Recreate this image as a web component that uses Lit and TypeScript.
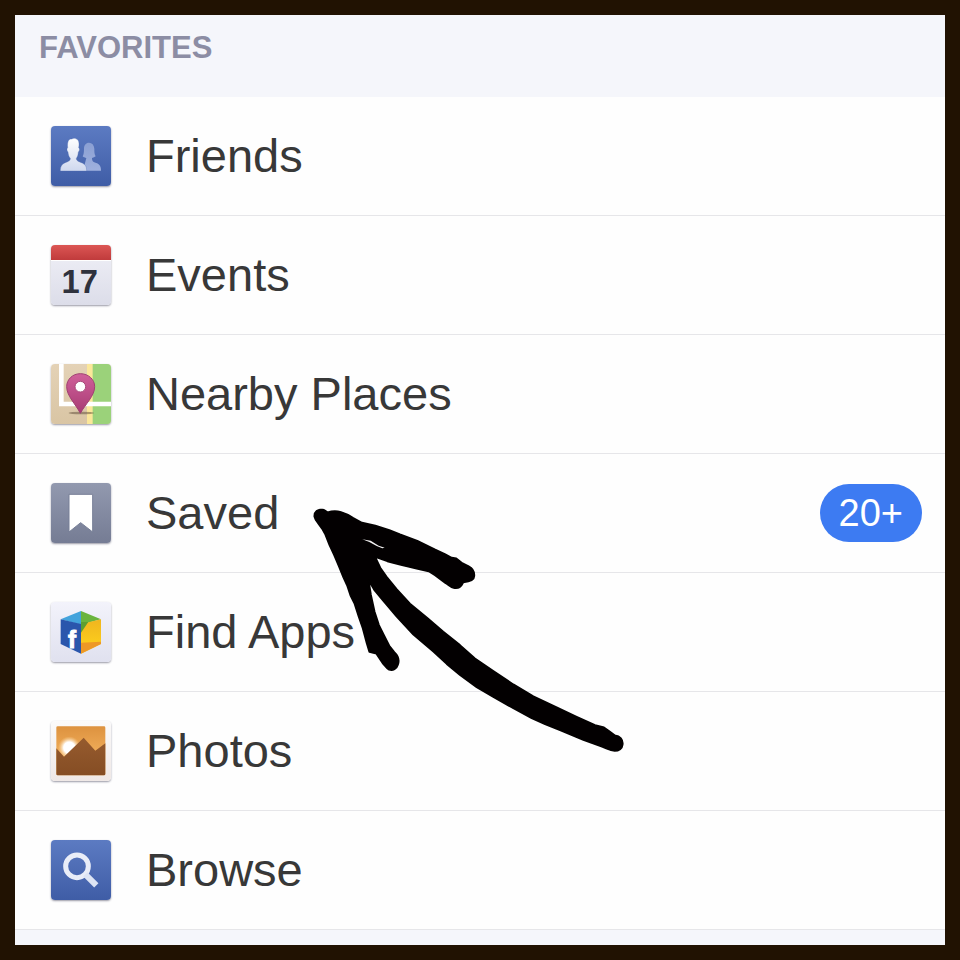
import { LitElement, html, css, svg, nothing, type TemplateResult } from "lit";
import { customElement, property } from "lit/decorators.js";

interface Entry {
  label: string;
  icon: string;
  badge?: string;
}

const entries: Entry[] = [
  { label: "Friends", icon: "friends" },
  { label: "Events", icon: "events" },
  { label: "Nearby Places", icon: "places" },
  { label: "Saved", icon: "saved", badge: "20+" },
  { label: "Find Apps", icon: "apps" },
  { label: "Photos", icon: "photos" },
  { label: "Browse", icon: "browse" },
];

const gradient = (id: string, top: string, bottom: string) => svg`
  <linearGradient id=${id} x1="0" y1="0" x2="0" y2="1">
    <stop offset="0" stop-color=${top}></stop>
    <stop offset="1" stop-color=${bottom}></stop>
  </linearGradient>`;

/* Every icon is drawn on a 180 x 180 grid. */
const icons: Record<string, TemplateResult<2>> = {
  friends: svg`
    <defs>${gradient("bg", "#5c7bc2", "#3f5da6")}${gradient("man", "#ffffff", "#cfd8ee")}${gradient("woman", "#8a9fd3", "#9fb1de")}</defs>
    <rect width="180" height="180" fill="url(#bg)"></rect>
    <path fill="url(#woman)" d="M96 134H150C150 118 144 113 128 108C124 106 123 101 123 96C127 95 131 93 134 91C130 85 130 78 130 68C129 56 123 50 114 50C105 50 99 57 99 68C99 79 98 86 95 91C98 94 102 95 106 96Z"></path>
    <path fill="url(#man)" stroke="#4c69b0" stroke-width="1" d="M28 135C28 119 34 112 50 107C57 104 58 102 58 97C53 92 52 86 51 78C47 74 47 67 50 65C48 45 54 38 63 39C67 35 84 36 84 53C84 58 84 61 83 65C87 68 86 74 82 78C81 87 80 92 76 97C76 102 78 105 86 108C101 113 107 119 107 135Z"></path>`,
  events: svg`
    <defs>${gradient("bg", "#f0f0f7", "#dcdde9")}${gradient("red", "#dc5654", "#c03b3c")}</defs>
    <rect width="180" height="180" fill="url(#bg)"></rect>
    <rect width="180" height="45" fill="url(#red)"></rect>
    <rect y="45" width="180" height="3" fill="#ffffff"></rect>
    <text x="86" y="144" text-anchor="middle" font-family="Liberation Sans, sans-serif" font-weight="700" font-size="98" fill="#2f323d">17</text>`,
  places: svg`
    <defs>${gradient("bg", "#e4d2b6", "#d9c5a4")}${gradient("pin", "#d0609a", "#a83b74")}</defs>
    <rect width="180" height="180" fill="url(#bg)"></rect>
    <rect x="116" width="64" height="180" fill="#9bd27a"></rect>
    <rect x="108" width="17" height="180" fill="#fbe79a"></rect>
    <path d="M31 0V120H180" fill="none" stroke="#ffffff" stroke-width="14"></path>
    <ellipse cx="91" cy="147" rx="38" ry="4" fill="#5b4a35" opacity=".5"></ellipse>
    <path d="M88 148C74 120 47 96 47 68C47 46 65 29 88 29C112 29 131 46 131 68C131 96 103 120 88 148Z" fill="url(#pin)" stroke="#a04072" stroke-width="3"></path>
    <circle cx="88" cy="68" r="16" fill="#ffffff" stroke="#a94a7b" stroke-width="3"></circle>`,
  saved: svg`
    <defs>${gradient("bg", "#9299af", "#757c94")}</defs>
    <rect width="180" height="180" fill="url(#bg)"></rect>
    <path d="M54 34H125V147L89 119L54 147Z" fill="#ffffff" stroke="#777f97" stroke-width="3"></path>`,
  apps: svg`
    <defs>${gradient("bg", "#f3f3fb", "#e0e1ef")}${gradient("yellow", "#f0b51f", "#ffd51c")}</defs>
    <rect width="180" height="180" fill="url(#bg)"></rect>
    <path d="M29 52L90 27V68Z" fill="#43a3dc"></path>
    <path d="M90 27L150 52L90 68Z" fill="#6ab43e"></path>
    <path d="M29 52L90 66V155L29 126Z" fill="#2a56ac"></path>
    <path d="M90 66L150 52V126L90 155Z" fill="url(#yellow)"></path>
    <path d="M90 60L112 60L90 92Z" fill="#5d9e31"></path>
    <path d="M90 122L150 119V126L90 155Z" fill="#ed9827"></path>
    <text x="63" y="137" text-anchor="middle" font-family="Liberation Sans, sans-serif" font-weight="700" font-size="72" fill="#ffffff" stroke="#ffffff" stroke-width="3">f</text>`,
  photos: svg`
    <defs>${gradient("bg", "#fbfafa", "#efe8e6")}${gradient("sky", "#dd923f", "#ffc26e")}${gradient("hill", "#965b2e", "#854d24")}
      <radialGradient id="sun"><stop offset=".5" stop-color="#ffffff"></stop><stop offset="1" stop-color="#ffd797" stop-opacity="0"></stop></radialGradient>
    </defs>
    <rect width="180" height="180" fill="url(#bg)"></rect>
    <rect x="16" y="16" width="147" height="147" rx="4" fill="url(#sky)"></rect>
    <circle cx="55" cy="80" r="34" fill="url(#sun)"></circle>
    <path d="M16 82L39 107L98 50L133 89L163 67V159Q163 163 159 163H20Q16 163 16 159Z" fill="url(#hill)"></path>`,
  browse: svg`
    <defs>${gradient("bg", "#5c7bc2", "#3f5da6")}</defs>
    <rect width="180" height="180" fill="url(#bg)"></rect>
    <circle cx="78" cy="79" r="34" fill="none" stroke="#e9edf8" stroke-width="15"></circle>
    <path d="M103 103L136 136" stroke="#dde4f4" stroke-width="18"></path>`,
};

@customElement("menu-row")
class MenuRow extends LitElement {
  @property() label = "";
  @property() icon = "";
  @property() badge?: string;

  static styles = css`
    :host {
      display: block;
    }
    .row {
      box-sizing: border-box;
      display: flex;
      align-items: center;
      gap: 35px;
      min-height: 119px;
      padding: 0 23px 0 36px;
      border-bottom: 1px solid #e6e6e9;
      background: #fefefe;
      color: #383838;
      font-size: 47px;
      line-height: 56px;
      text-decoration: none;
    }
    .icon {
      flex: none;
      width: 60px;
      height: 60px;
      border-radius: 4px;
      box-shadow: 0 1px 2px rgba(30, 30, 60, 0.45);
    }
    .label {
      flex: 1;
    }
    .badge {
      padding: 0 19px;
      border-radius: 29px;
      background: #3d7bf2;
      color: #ffffff;
      font-size: 38px;
      line-height: 58px;
    }
  `;

  render() {
    return html`
      <a class="row" href="#${this.icon}">
        <svg class="icon" viewBox="0 0 180 180" aria-hidden="true">${icons[this.icon]}</svg>
        <span class="label">${this.label}</span>
        ${this.badge ? html`<span class="badge">${this.badge}</span>` : nothing}
      </a>
    `;
  }
}

@customElement("app-root")
class AppRoot extends LitElement {
  static styles = css`
    :host {
      box-sizing: border-box;
      display: block;
      position: relative;
      min-height: 100vh;
      border: 15px solid #211202;
      background: #f5f6fb;
      font-family: "Liberation Sans", Arial, sans-serif;
    }
    .heading {
      margin: 0;
      padding: 15px 24px 31px;
      color: #8c8da4;
      font-size: 31px;
      font-weight: 700;
      line-height: 36px;
    }
    .list {
      margin: 0;
      padding: 0;
      list-style: none;
    }
    .arrow {
      position: absolute;
      left: 285px;
      top: 485px;
      width: 340px;
      height: 260px;
      pointer-events: none;
    }
  `;

  render() {
    return html`
      <h2 class="heading">FAVORITES</h2>
      <ul class="list">
        ${entries.map(
          (e) => html`<li><menu-row .label=${e.label} .icon=${e.icon} .badge=${e.badge}></menu-row></li>`
        )}
      </ul>
      <svg class="arrow" viewBox="0 0 1020 780" aria-hidden="true">
        <path
          fill="#030001"
          stroke="#030001"
          stroke-width="5"
          stroke-linejoin="round"
          d="M43 50C42 34 54 27 66 29C74 28 78 34 83 37C95 33 112 33 123 36C138 40 148 46 160 54L186 68L226 77L268 90L300 103L352 122L404 148L436 163L455 173L469 175L488 190L506 199C518 205 524 213 523 228C523 240 513 245 490 247C484 260 474 267 461 264C451 262 445 254 436 249L405 226L386 214L350 206L300 194L262 184L226 171L241 203L260 230L290 267L330 311L382 354L430 395L480 435L525 475L580 513L640 553L700 589L770 622L830 650L885 675L912 682L930 695L945 706C960 707 970 720 968 734C967 746 957 753 944 753C930 752 920 745 906 740L850 720L780 691L735 673L695 655L640 625L580 591L530 562L480 525L440 492L400 455L340 404L290 350L250 303L222 269L206 241L213 285L224 335L237 375L252 405L268 437L283 456C296 468 298 483 294 494C290 507 279 513 267 509C259 505 255 498 249 491L229 461L208 456L200 430L188 385L176 350L163 310L151 286L141 256L130 232L116 198L102 165L88 135L76 104L66 86L54 70C49 64 45 59 43 50Z"
        ></path>
        <path fill="#f4f2f3" d="M187 118L212 122L236 137L254 143L247 145L230 138L208 126Z"></path>
      </svg>
    `;
  }
}
